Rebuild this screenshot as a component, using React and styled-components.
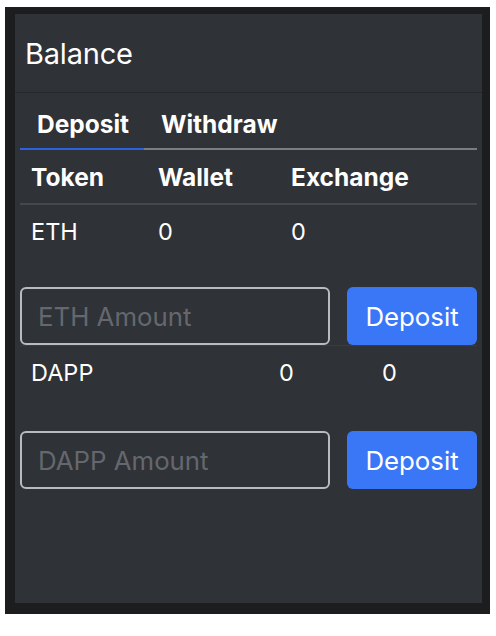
import React from "react";
import styled, { createGlobalStyle } from "styled-components";

const Global = createGlobalStyle`
  html, body { margin: 0; padding: 0; background: #ffffff; }
  body { font-family: Inter, "Liberation Sans", Arial, sans-serif; }
  * { box-sizing: border-box; }
`;

const Frame = styled.div`
  margin: 7px 0 0 5px;
  width: 485px;
  height: 607px;
  background: #1c1d1e;
  padding: 7px 8px 11px 10px;
  display: flex;
`;

const Card = styled.div`
  flex: 1;
  background: #2f3236;
  display: flex;
  flex-direction: column;
  color: #ffffff;
`;

const Header = styled.div`
  height: 79px;
  padding: 1px 0 0 10px;
  border-bottom: 1px solid #26282c;
  font-size: 29px;
  line-height: 77px;
  font-weight: 400;
  letter-spacing: -0.2px;
`;

const Body = styled.div`
  padding: 0 5px 0 5px;
  display: flex;
  flex-direction: column;
`;

const Tabs = styled.div`
  display: flex;
  border-bottom: 2px solid #7a7d82;
`;

const Tab = styled.div`
  height: 57px;
  padding: 6px 16px 0 17px;
  line-height: 51px;
  font-size: 24.5px;
  font-weight: 700;
  margin-bottom: -2px;
  border-bottom: 2px solid ${(p) => (p.$active ? "#2b63dc" : "transparent")};
  width: ${(p) => (p.$active ? "124px" : "auto")};
`;

const Row = styled.div`
  display: grid;
  grid-template-columns: ${(p) => p.$cols};
  align-items: center;
  height: ${(p) => p.$h}px;
  padding-bottom: ${(p) => p.$pb || 0}px;
  border-bottom: ${(p) => (p.$line ? "2px solid #45484e" : "none")};
  border-top: ${(p) => (p.$top ? "1px solid #393c41" : "none")};
  font-size: ${(p) => (p.$bold ? 24.5 : 23.5)}px;
  font-weight: ${(p) => (p.$bold ? 700 : 400)};
`;

const Cell = styled.div`
  padding-left: 11px;
  white-space: nowrap;
`;

const Form = styled.form`
  display: flex;
  gap: 17px;
  margin-top: ${(p) => p.$mt}px;
  height: 58px;
`;

const Input = styled.input`
  width: 310px;
  height: 58px;
  background: transparent;
  border: 2px solid #b9bbbe;
  border-radius: 6px;
  padding: 0 0 0 16px;
  font-family: Inter, "Liberation Sans", Arial, sans-serif;
  font-size: 25.8px;
  color: #ffffff;
  outline: none;
  &::placeholder { color: #64686e; }
`;

const Button = styled.button`
  flex: 1;
  height: 58px;
  background: #3a77f7;
  border: none;
  border-radius: 6px;
  color: #ffffff;
  font-family: Inter, "Liberation Sans", Arial, sans-serif;
  font-size: 25.8px;
  font-weight: 400;
  padding: 0;
`;

export default function App() {
  return (
    <>
      <Global />
      <Frame>
        <Card>
          <Header>Balance</Header>
          <Body>
            <Tabs>
              <Tab $active>Deposit</Tab>
              <Tab>Withdraw</Tab>
            </Tabs>
            <Row $cols="127px 133px 1fr" $h={55} $bold $line>
              <Cell>Token</Cell>
              <Cell>Wallet</Cell>
              <Cell>Exchange</Cell>
            </Row>
            <Row $cols="127px 133px 1fr" $h={54} $pb={2}>
              <Cell>ETH</Cell>
              <Cell>0</Cell>
              <Cell>0</Cell>
            </Row>
            <Form $mt={28} onSubmit={(e) => e.preventDefault()}>
              <Input placeholder="ETH Amount" />
              <Button type="submit">Deposit</Button>
            </Form>
            <Row $cols="248px 103px 1fr" $h={60} $top $pb={6}>
              <Cell>DAPP</Cell>
              <Cell>0</Cell>
              <Cell>0</Cell>
            </Row>
            <Form $mt={26} onSubmit={(e) => e.preventDefault()}>
              <Input placeholder="DAPP Amount" />
              <Button type="submit">Deposit</Button>
            </Form>
          </Body>
        </Card>
      </Frame>
    </>
  );
}
